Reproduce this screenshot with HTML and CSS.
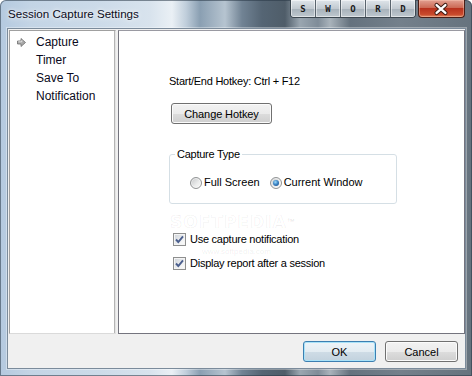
FILE: index.html
```html
<!DOCTYPE html>
<html lang="en">
<head>
  <meta charset="UTF-8">
  <title>Session Capture Settings</title>
  <link rel="stylesheet" href="styles.css">
</head>
<body>
  <div class="window">
    <div class="titlebar">
      <span class="title">Session Capture Settings</span>
      <div class="caption-tools">
        <span>S</span><span>W</span><span>O</span><span>R</span><span>D</span>
      </div>
      <div class="close-btn">
        <svg width="47" height="18" viewBox="0 0 47 18">
          <path d="M19 5 L28 13 M28 5 L19 13" stroke="#3a1a12" stroke-width="4.4" stroke-linecap="round"/>
          <path d="M19 5 L28 13 M28 5 L19 13" stroke="#fff" stroke-width="2.4" stroke-linecap="round"/>
        </svg>
      </div>
    </div>

    <div class="client">
      <div class="panels">
        <ul class="nav-list">
          <li>
            <span class="nav-arrow">
              <svg width="9" height="9" viewBox="0 0 9 9">
                <path d="M0.5 3 L4 3 L4 0.5 L8.5 4.5 L4 8.5 L4 6 L0.5 6 Z" fill="#a9a9a9" stroke="#6f6f6f" stroke-width="0.8"/>
                <path d="M1.3 3.8 L4.8 3.8 L4.8 2.2" fill="none" stroke="#f2f2f2" stroke-width="0.8"/>
              </svg>
            </span>
            Capture
          </li>
          <li><span class="nav-arrow"></span>Timer</li>
          <li><span class="nav-arrow"></span>Save To</li>
          <li><span class="nav-arrow"></span>Notification</li>
        </ul>

        <div class="settings-panel">
          <div class="hotkey-text">Start/End Hotkey: Ctrl + F12</div>
          <button class="btn btn-hotkey">Change Hotkey</button>

          <fieldset class="group">
            <legend>Capture Type</legend>
            <div class="radio-row">
              <label class="radio-item"><span class="radio"></span>Full Screen</label>
              <label class="radio-item"><span class="radio checked"></span>Current Window</label>
            </div>
          </fieldset>

          <div class="check-list">
            <label class="check-item">
              <span class="checkbox">
                <svg width="11" height="11" viewBox="0 0 11 11">
                  <path d="M2 5.5 L4.3 8 L9 2.3" fill="none" stroke="#4b5f8e" stroke-width="1.9"/>
                </svg>
              </span>
              Use capture notification
            </label>
            <label class="check-item">
              <span class="checkbox">
                <svg width="11" height="11" viewBox="0 0 11 11">
                  <path d="M2 5.5 L4.3 8 L9 2.3" fill="none" stroke="#4b5f8e" stroke-width="1.9"/>
                </svg>
              </span>
              Display report after a session
            </label>
          </div>
        </div>
      </div>

      <div class="footer">
        <button class="btn btn-default">OK</button>
        <button class="btn">Cancel</button>
      </div>
    </div>

    <div class="watermark">
      <span class="wm-big">SOFTPEDIA</span><span class="wm-tm">™</span>
    </div>
    <span class="wm-small">www.softpedia.com</span>
  </div>
</body>
</html>
```

FILE: styles.css
```css
body {
  margin: 0;
  background-color: #ffffff;
  font-family: "Liberation Sans", Arial, sans-serif;
  font-size: 11px;
  color: #000;
}

.window {
  position: relative;
  width: 472px;
  height: 376px;
  box-sizing: border-box;
  padding: 0 6px 7px 7px;
  display: flex;
  flex-direction: column;
  overflow: hidden;
  border-radius: 6px 6px 0 0;
  background: linear-gradient(90deg,
    #b4c9df 0px, #c3d4e5 30px, #ccdbe9 100px, #d8e3ed 150px,
    #eaf0f5 172px, #c0cedb 186px, #8a9fb2 200px, #b6c4d0 225px,
    #718394 242px, #556574 262px, #4f5d69 285px, #9aa6b0 300px,
    #7f8c98 318px, #a9b3bb 330px, #65727e 350px, #74808b 400px,
    #66737e 472px);
  box-shadow: inset 0 0 0 1px rgba(40, 55, 70, 0.55);
}

.titlebar {
  height: 28px;
  display: flex;
  align-items: flex-start;
}

.title {
  align-self: center;
  padding-left: 1px;
  font-size: 11.6px;
  line-height: 14px;
  color: #0b0b1a;
  text-shadow: 0 0 6px rgba(255, 255, 255, 0.95), 0 0 3px rgba(255, 255, 255, 0.8);
}

.caption-tools {
  margin-left: auto;
  display: flex;
  height: 18px;
  border: 1px solid #3c4750;
  border-top: none;
  border-radius: 0 0 4px 4px;
  overflow: hidden;
  box-sizing: border-box;
}

.caption-tools span {
  width: 24px;
  display: flex;
  align-items: center;
  justify-content: center;
  font-family: "DejaVu Sans Mono", monospace;
  font-size: 9px;
  font-weight: bold;
  color: #1a1a1a;
  background: linear-gradient(#dfe5ea, #c2cad1 50%, #a6b1ba 51%, #bfc8cf);
  border-right: 1px solid #59646d;
  box-shadow: inset 0 0 0 1px rgba(255, 255, 255, 0.5);
}

.caption-tools span:last-child {
  border-right: none;
}

.close-btn {
  width: 47px;
  height: 18px;
  margin-left: 2px;
  margin-right: 1px;
  box-sizing: border-box;
  border: 1px solid #4a1e16;
  border-top: none;
  border-radius: 0 0 4px 4px;
  background: linear-gradient(#e2a091, #cc6a55 45%, #b8321d 50%, #c94a2c 85%, #e08a63);
  box-shadow: inset 0 0 0 1px rgba(255, 210, 190, 0.4);
  display: flex;
  align-items: center;
  justify-content: center;
}

.close-btn svg {
  display: block;
  margin-left: -1px;
}

.client {
  flex: 1;
  display: flex;
  flex-direction: column;
  border: 1px solid #7b8b9b;
  background-color: #f0f0f0;
  box-shadow: 0 0 0 1px rgba(255, 255, 255, 0.35);
}

.panels {
  display: flex;
  gap: 2px;
  height: 304px;
  padding: 1px 0 0 1px;
}

.nav-list {
  list-style: none;
  margin: 0;
  width: 107px;
  box-sizing: border-box;
  padding: 2px 0 0 7px;
  background-color: #fff;
  border: 1px solid;
  border-color: #a0a0a0 #e3e3e3 #dadada #a0a0a0;
  box-shadow: inset -1px 0 0 #b4b4b4;
  font-size: 12px;
}

.nav-list li {
  height: 18px;
  display: flex;
  align-items: center;
  color: #0a0a20;
}

.nav-arrow {
  width: 19px;
  display: flex;
  align-items: center;
}

.nav-arrow svg {
  display: block;
}

.settings-panel {
  flex: 1;
  background-color: #fff;
  border: 1px solid #74747e;
  border-top-color: #9a9aa2;
  padding: 44px 0 0 50px;
  display: flex;
  flex-direction: column;
  align-items: flex-start;
  letter-spacing: -0.25px;
}

.hotkey-text {
  line-height: 13px;
}

.btn {
  font-family: "Liberation Sans", Arial, sans-serif;
  font-size: 11px;
  color: #000;
  height: 21px;
  padding: 0;
  border: 1px solid #707070;
  border-radius: 3px;
  background: linear-gradient(#f2f2f2, #ebebeb 50%, #dddddd 51%, #cfcfcf);
  box-shadow: inset 0 0 0 1px #fbfbfb;
}

.btn-hotkey {
  width: 101px;
  margin: 15px 0 0 2px;
  letter-spacing: -0.1px;
}

.group {
  margin: 24px 0 0 0;
  width: 228px;
  height: 56px;
  box-sizing: border-box;
  padding: 0 0 0 5px;
  border: 1px solid #d5dfe5;
  border-radius: 3px;
  min-inline-size: 0;
}

.group legend {
  padding: 0 2px;
  line-height: 13px;
}

.radio-row {
  display: flex;
  margin: 15px 0 0 15px;
  letter-spacing: 0;
}

.radio-item {
  display: flex;
  align-items: center;
  gap: 2px;
  line-height: 13px;
  margin-right: 10px;
}

.radio {
  position: relative;
  width: 12px;
  height: 12px;
  box-sizing: border-box;
  border-radius: 50%;
  border: 1px solid #929495;
  background: linear-gradient(135deg, #c4c6c8, #eceded 60%, #fafafa);
  box-shadow: inset 0 0 0 1px rgba(255, 255, 255, 0.55);
}

.radio.checked::after {
  content: "";
  position: absolute;
  left: 2px;
  top: 2px;
  width: 6px;
  height: 6px;
  border-radius: 50%;
  background: radial-gradient(circle at 40% 35%, #9fdcfb 0, #3d86c6 45%, #133f78 100%);
}

.check-list {
  display: flex;
  flex-direction: column;
  gap: 11px;
  margin: 29px 0 0 4px;
}

.check-item {
  display: flex;
  align-items: center;
  gap: 4px;
  line-height: 13px;
}

.checkbox {
  width: 13px;
  height: 13px;
  box-sizing: border-box;
  border: 1px solid #8e8f8f;
  background: linear-gradient(135deg, #cdd2d8, #f3f4f5 70%, #fbfbfb);
  box-shadow: inset 0 0 0 1px #f4f4f4;
  display: flex;
  align-items: center;
  justify-content: center;
}

.checkbox svg {
  display: block;
}

.footer {
  flex: 1;
  display: flex;
  justify-content: flex-end;
  align-items: flex-start;
  gap: 9px;
  padding: 7px 7px 0 0;
}

.footer .btn {
  width: 73px;
}

.btn-default {
  border-color: #3c7fb1;
  background: linear-gradient(#eef4f8, #e3ecf2 50%, #cfdce6 51%, #c2d2de);
  box-shadow: inset 0 0 0 1px #a9e2f8;
}

.watermark {
  position: absolute;
  left: 170px;
  top: 212px;
  line-height: 20px;
  pointer-events: none;
  white-space: nowrap;
}

.wm-big {
  font-family: "DejaVu Sans", sans-serif;
  font-size: 17px;
  font-weight: bold;
  letter-spacing: 1px;
  color: rgba(255, 255, 255, 0.4);
  -webkit-text-stroke: 0.6px rgba(0, 0, 0, 0.09);
}

.wm-tm {
  font-size: 8px;
  color: rgba(0, 0, 0, 0.12);
  vertical-align: top;
}

.wm-small {
  position: absolute;
  left: 202px;
  top: 247px;
  line-height: 10px;
  font-size: 8px;
  white-space: nowrap;
  color: rgba(0, 0, 0, 0.08);
  pointer-events: none;
}
```
